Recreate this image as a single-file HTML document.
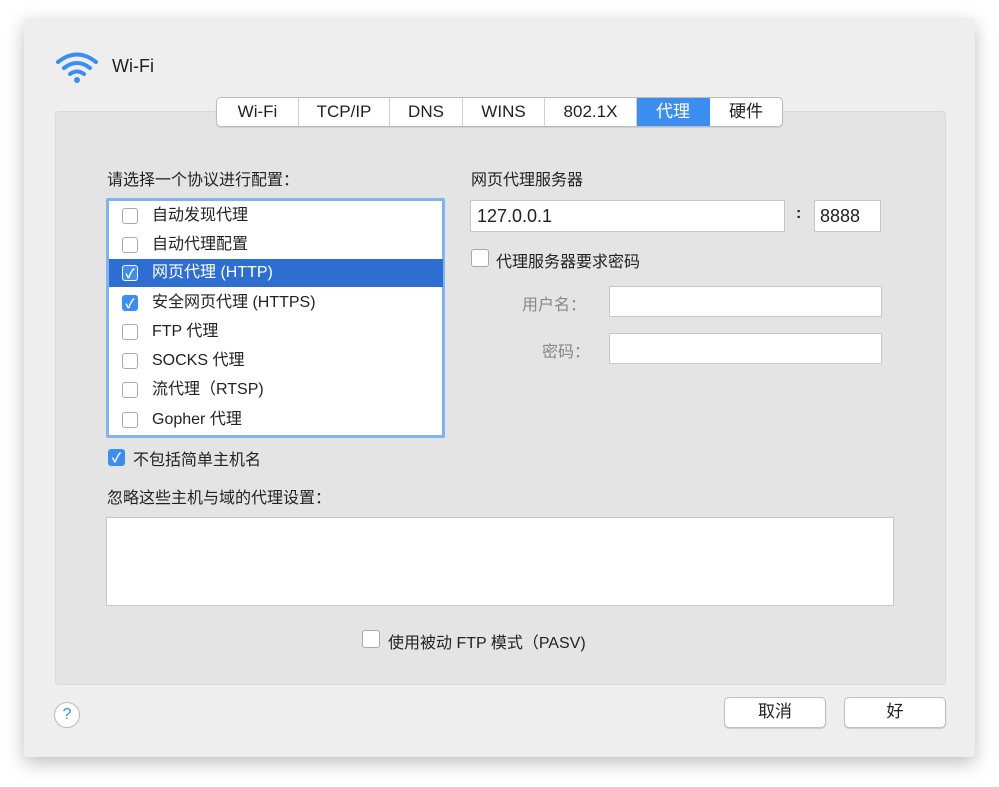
<!DOCTYPE html>
<html><head><meta charset="utf-8"><style>
body{margin:0;width:999px;height:787px;background:#fff;font-family:"Liberation Sans","Noto Sans CJK SC",sans-serif;font-size:16px;color:#222;position:relative;overflow:hidden}
.a{position:absolute}
.win{left:24px;top:18px;width:951px;height:739px;background:#eeeeee;box-shadow:0 6px 18px rgba(0,0,0,.25);border-radius:4px}
.panel{left:55px;top:111px;width:889px;height:572px;background:#e4e4e4;border:1px solid #d8d8d8;border-radius:4px}
.tabs{left:216px;top:97px;height:28px;display:flex;background:#fff;border:1px solid #bcbcbc;border-radius:5px;overflow:hidden;box-shadow:0 1px 1px rgba(0,0,0,.1)}
.tabs div{height:28px;line-height:28px;text-align:center;border-right:1px solid #d0d0d0;font-size:17px}
.cb{width:16px;height:16px;border:1px solid #aaa;border-radius:3px;background:#fff;box-sizing:border-box}
.cb.on{background:#3b8ef0;border-color:#3b8ef0;color:#fff;font-size:13px;line-height:15px;text-align:center;font-weight:bold}
.row{left:0;width:334px;height:29px;line-height:29px}
.row .cb{position:absolute;left:13px;top:7px}
.row span{position:absolute;left:43px}
.inp{background:#fff;border:1px solid #c8c8c8;box-sizing:border-box}
.btn{background:#fff;border:1px solid #c0c0c0;border-radius:5px;box-shadow:0 1px 1px rgba(0,0,0,.15);text-align:center;line-height:28px;font-size:17px}
</style></head><body>
<div class="a win"></div>
<svg class="a" style="left:54px;top:50px" width="46" height="34" viewBox="0 0 46 34"><g fill="none" stroke="#3b8ef0" stroke-width="4" stroke-linecap="round"><path d="M4 12 Q23 -3 42 12"/><path d="M10 18 Q23 8 36 18"/><path d="M16 24 Q23 19 30 24"/></g><circle cx="23" cy="30" r="3" fill="#3b8ef0"/></svg>
<div class="a" style="left:112px;top:56px;font-size:18px">Wi-Fi</div>
<div class="a panel"></div>
<div class="a tabs">
<div style="width:81px">Wi-Fi</div><div style="width:90px">TCP/IP</div><div style="width:72px">DNS</div><div style="width:81px">WINS</div><div style="width:91px">802.1X</div><div style="width:72px;background:#3b8ef0;color:#fff;border-color:#3b8ef0">代理</div><div style="width:72px;border:none">硬件</div>
</div>
<div class="a" style="left:107px;top:166px">请选择一个协议进行配置：</div>
<div class="a" style="left:106px;top:198px;width:339px;height:240px;background:#fff;border:3px solid #7fb3f3;box-sizing:border-box;border-radius:2px">
<div class="a row" style="top:0px"><div class="cb"></div><span>自动发现代理</span></div>
<div class="a row" style="top:29px"><div class="cb"></div><span>自动代理配置</span></div>
<div class="a row" style="top:58px;height:28px;background:#2f6ed1;color:#fff"><div class="cb on" style="border-color:#fff;top:6px">✓</div><span style="line-height:28px">网页代理 (HTTP)</span></div>
<div class="a row" style="top:87px"><div class="cb on">✓</div><span>安全网页代理 (HTTPS)</span></div>
<div class="a row" style="top:116px"><div class="cb"></div><span>FTP 代理</span></div>
<div class="a row" style="top:145px"><div class="cb"></div><span>SOCKS 代理</span></div>
<div class="a row" style="top:174px"><div class="cb"></div><span>流代理（RTSP)</span></div>
<div class="a row" style="top:204px"><div class="cb"></div><span>Gopher 代理</span></div>
</div>
<div class="a cb on" style="left:108px;top:449px;width:17px;height:17px">✓</div>
<div class="a" style="left:133px;top:446px">不包括简单主机名</div>
<div class="a" style="left:107px;top:484px">忽略这些主机与域的代理设置：</div>
<div class="a inp" style="left:106px;top:517px;width:788px;height:89px"></div>
<div class="a" style="left:471px;top:166px">网页代理服务器</div>
<div class="a inp" style="left:470px;top:200px;width:315px;height:32px;line-height:30px;padding-left:6px;font-size:18px">127.0.0.1</div>
<div class="a" style="left:796px;top:205px;font-weight:bold">:</div>
<div class="a inp" style="left:814px;top:200px;width:67px;height:32px;line-height:30px;padding-left:5px;font-size:18px">8888</div>
<div class="a cb" style="left:471px;top:249px;width:18px;height:18px"></div>
<div class="a" style="left:496px;top:248px">代理服务器要求密码</div>
<div class="a" style="left:522px;top:291px;color:#888">用户名：</div>
<div class="a inp" style="left:609px;top:286px;width:273px;height:31px"></div>
<div class="a" style="left:542px;top:338px;color:#888">密码：</div>
<div class="a inp" style="left:609px;top:333px;width:273px;height:31px"></div>
<div class="a cb" style="left:362px;top:630px;width:18px;height:18px"></div>
<div class="a" style="left:388px;top:629px">使用被动 FTP 模式（PASV)</div>
<div class="a" style="left:54px;top:702px;width:24px;height:24px;border-radius:50%;background:#fff;border:1px solid #bbb;color:#3b8ef0;text-align:center;line-height:24px;font-size:16px">?</div>
<div class="a btn" style="left:724px;top:697px;width:100px;height:29px">取消</div>
<div class="a btn" style="left:844px;top:697px;width:100px;height:29px">好</div>
</body></html>
